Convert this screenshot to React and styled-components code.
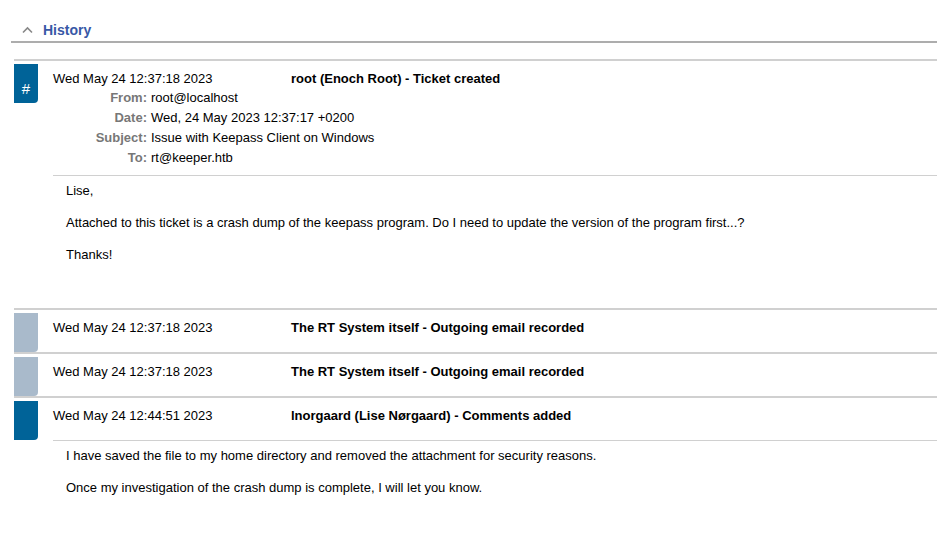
import React from 'react'
import styled, {createGlobalStyle} from 'styled-components'

const GlobalStyle = createGlobalStyle`
  body {
    margin: 0;
    background: #fff;
    font-family: 'Liberation Sans', Arial, sans-serif;
    font-size: 13px;
    color: #000;
  }
`

const Page = styled.div`
  padding: 21px 0 0 11px;
`

const Header = styled.div`
  display: flex;
  align-items: center;
  gap: 9px;
  padding-left: 10px;
  padding-bottom: 2px;
  line-height: 18px;
  border-bottom: 2px solid #adadad;
`

const HeaderTitle = styled.span`
  font-size: 14px;
  font-weight: bold;
  color: #3858a6;
`

const List = styled.div`
  margin: 16px 0 0 3px;
`

const Transaction = styled.div`
  display: flex;
  align-items: flex-start;
  border-top: 2px solid #d0d0d0;
  padding-top: 2px;
`

const Badge = styled.div`
  flex: 0 0 24px;
  height: 39px;
  margin-top: 1px;
  background: ${p => p.$muted ? '#a9bacb' : '#006398'};
  border-bottom-right-radius: 4px;
  color: #fff;
  font-size: 15px;
  display: flex;
  align-items: center;
  justify-content: center;
  padding-top: 10px;
  box-sizing: border-box;
`

const Content = styled.div`
  flex: 1;
  margin-left: 15px;
`

const Meta = styled.div`
  padding: 7px 0 ${p => p.$pad}px;
`

const MetaRow = styled.div`
  display: grid;
  grid-template-columns: 238px 1fr;
  line-height: 18px;
`

const Who = styled.span`
  font-weight: bold;
`

const Headers = styled.div`
  display: grid;
  grid-template-columns: 94px 1fr;
  column-gap: 4px;
  line-height: 20px;
`

const Label = styled.span`
  text-align: right;
  font-weight: bold;
  color: #777;
`

const Body = styled.div`
  border-top: 1px solid #d0d0d0;
  padding: 7px 0 ${p => p.$bottom}px 13px;
`

const Para = styled.p`
  margin: 0 0 16px;
  line-height: 16px;
`

const Chevron = () => (
  <svg width="13" height="12" viewBox="0 0 13 12">
    <path d="M2 8.5 L6.5 4 L11 8.5" fill="none" stroke="#888" strokeWidth="1.6" />
  </svg>
)

const headers = [
  ['From:', 'root@localhost'],
  ['Date:', 'Wed, 24 May 2023 12:37:17 +0200'],
  ['Subject:', 'Issue with Keepass Client on Windows'],
  ['To:', 'rt@keeper.htb'],
]

const App = () => (
  <Page>
    <GlobalStyle />
    <Header>
      <Chevron />
      <HeaderTitle>History</HeaderTitle>
    </Header>
    <List>
      <Transaction>
        <Badge>#</Badge>
        <Content>
          <Meta $pad={7}>
            <MetaRow>
              <span>Wed May 24 12:37:18 2023</span>
              <Who>root (Enoch Root) - Ticket created</Who>
            </MetaRow>
            <Headers>
              {headers.map(([k, v]) => (
                <React.Fragment key={k}>
                  <Label>{k}</Label>
                  <span>{v}</span>
                </React.Fragment>
              ))}
            </Headers>
          </Meta>
          <Body $bottom={29}>
            <Para>Lise,</Para>
            <Para>Attached to this ticket is a crash dump of the keepass program. Do I need to update the version of the program first...?</Para>
            <Para>Thanks!</Para>
          </Body>
        </Content>
      </Transaction>
      <Transaction>
        <Badge $muted />
        <Content>
          <Meta $pad={0}>
            <MetaRow>
              <span>Wed May 24 12:37:18 2023</span>
              <Who>The RT System itself - Outgoing email recorded</Who>
            </MetaRow>
          </Meta>
        </Content>
      </Transaction>
      <Transaction>
        <Badge $muted />
        <Content>
          <Meta $pad={0}>
            <MetaRow>
              <span>Wed May 24 12:37:18 2023</span>
              <Who>The RT System itself - Outgoing email recorded</Who>
            </MetaRow>
          </Meta>
        </Content>
      </Transaction>
      <Transaction>
        <Badge />
        <Content>
          <Meta $pad={15}>
            <MetaRow>
              <span>Wed May 24 12:44:51 2023</span>
              <Who>lnorgaard (Lise Nørgaard) - Comments added</Who>
            </MetaRow>
          </Meta>
          <Body $bottom={0}>
            <Para>I have saved the file to my home directory and removed the attachment for security reasons.</Para>
            <Para>Once my investigation of the crash dump is complete, I will let you know.</Para>
          </Body>
        </Content>
      </Transaction>
    </List>
  </Page>
)

export default App
